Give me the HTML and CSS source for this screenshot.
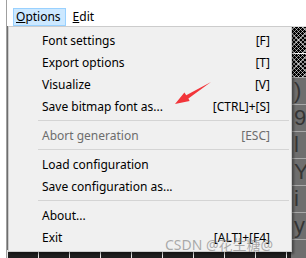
FILE: index.html
```html
<!DOCTYPE html>
<html lang="en">
  <head>
    <meta charset="UTF-8" />
    <title>Options menu</title>
    <link rel="stylesheet" href="styles.css">
  </head>
  <body>
    <div class="app">
      <div class="menubar">
        <div class="menubar-item active"><u>O</u>ptions</div>
        <div class="menubar-item"><u>E</u>dit</div>
      </div>
      <div class="workspace">
        <div class="grid">
          <div class="strip"></div>
        </div>
        <div class="charlist">
          <div class="pattern tall"></div>
          <div class="pattern"></div>
          <div class="glyph">)</div>
          <div class="glyph">9</div>
          <div class="glyph">l</div>
          <div class="glyph">Y</div>
          <div class="glyph">i</div>
          <div class="glyph">y</div>
          <div class="glyph rest"></div>
        </div>
      </div>

      <div class="dropdown">
        <div class="item"><span>Font settings</span><span>[F]</span></div>
        <div class="item"><span>Export options</span><span>[T]</span></div>
        <div class="item"><span>Visualize</span><span>[V]</span></div>
        <div class="item"><span>Save bitmap font as...</span><span>[CTRL]+[S]</span></div>
        <div class="separator"></div>
        <div class="item disabled"><span>Abort generation</span><span>[ESC]</span></div>
        <div class="separator"></div>
        <div class="item"><span>Load configuration</span></div>
        <div class="item"><span>Save configuration as...</span></div>
        <div class="separator"></div>
        <div class="item"><span>About...</span></div>
        <div class="item"><span>Exit</span><span>[ALT]+[F4]</span></div>
      </div>

      <svg class="arrow" width="40" height="26" viewBox="173 80 40 26">
        <polygon points="175,104 184.4,92.5 186.2,95.2 211,82 188.4,98.6 189.6,101.1" fill="#f2353a" />
      </svg>

      <div class="watermark">CSDN @花生糖@</div>
    </div>
  </body>
</html>
```

FILE: styles.css
```css
html,
body {
  margin: 0;
  background-color: #fff;
  overflow: hidden;
}
.app {
  position: relative;
  width: 299px;
  height: 250px;
  padding-top: 8px;
  margin-left: 6px;
  border-left: 1px solid #a0a0a0;
  font-family: "Noto Sans", "Noto Sans CJK SC", sans-serif;
  font-size: 12px;
  color: #000;
}
.menubar {
  display: flex;
  height: 18px;
  padding-left: 6px;
  background-color: #fff;
}
.menubar-item {
  display: flex;
  align-items: center;
  padding: 0 6px;
  border: 1px solid transparent;
  box-sizing: border-box;
  line-height: 16px;
}
.menubar-item.active {
  background-color: #cce8ff;
  border-color: #99d1ff;
  padding: 0 4px 0 2px;
}
.workspace {
  display: flex;
  height: 232px;
}
.grid {
  flex: 1;
  display: flex;
  flex-direction: column;
  justify-content: flex-end;
  background-color: #6e6e6e;
}
.strip {
  height: 8px;
  background: repeating-linear-gradient(90deg, #e6e6e6 0 1px, #1e1e1e 1px 31px);
}
.charlist {
  width: 15px;
  display: flex;
  flex-direction: column;
  border-top: 1px solid #dcdcdc;
}
.pattern {
  height: 23px;
  border-top: 1px solid #f4f4f4;
  background-color: #000;
  background-image: repeating-linear-gradient(45deg, transparent 0 2px, rgba(255, 255, 255, 0.55) 2px 3px),
    repeating-linear-gradient(-45deg, transparent 0 2px, rgba(255, 255, 255, 0.55) 2px 3px);
}
.pattern.tall {
  height: 26px;
  border-top: none;
}
.glyph {
  height: 26px;
  border-top: 1px solid #a8a8a8;
  background-color: #6e6e6e;
  color: #353535;
  font-family: "Liberation Sans", sans-serif;
  font-size: 22px;
  line-height: 26px;
  padding-left: 3px;
  overflow: hidden;
}
.glyph.rest {
  flex: 1;
}
.dropdown {
  position: absolute;
  left: 1px;
  top: 26px;
  width: 282px;
  height: 222px;
  padding: 2px 0 0;
  background-color: #f0f0f0;
  border: 1px solid #cccccc;
  box-shadow: 2px 2px 2px rgba(0, 0, 0, 0.35);
}
.item {
  display: flex;
  justify-content: space-between;
  align-items: center;
  height: 22px;
  padding: 0 21px 0 33px;
}
.item.disabled {
  color: #6d6d6d;
}
.separator {
  height: 1px;
  margin: 3px 2px 3px 29px;
  background-color: #d4d4d4;
}
.arrow {
  position: absolute;
  left: 166px;
  top: 80px;
}
.watermark {
  position: absolute;
  left: 158px;
  top: 237px;
  font-size: 14px;
  line-height: 15px;
  color: rgba(120, 120, 120, 0.6);
  white-space: nowrap;
}
```
